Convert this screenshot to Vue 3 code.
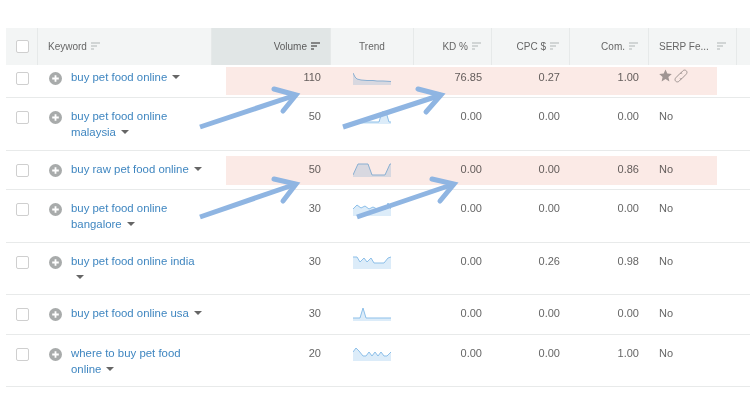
<script setup>
const headers = [
  { label: "Keyword", cls: "left" },
  { label: "Volume", cls: "right active" },
  { label: "Trend", cls: "center", noSort: true },
  { label: "KD %", cls: "right" },
  { label: "CPC $", cls: "right" },
  { label: "Com.", cls: "right" },
  { label: "SERP Fe...", cls: "serp" },
];

// trend points are x,y in a 38x14 box, line only; the fill is closed along the bottom
const rows = [
  { kw: "buy pet food online", vol: 110, kd: "76.85", cpc: "0.27", com: "1.00", serp: null,
    trend: "0,2 2,6 4,8 8,9 14,9.5 20,9.5 24,10 30,10 38,10.5" },
  { kw: "buy pet food online malaysia", vol: 50, kd: "0.00", cpc: "0.00", com: "0.00", serp: "No",
    trend: "0,12 26,12 29,2 33,2 36,12 38,12" },
  { kw: "buy raw pet food online", vol: 50, kd: "0.00", cpc: "0.00", com: "0.86", serp: "No",
    trend: "0,12 5,1 15,1 19,12 32,12 37,1 38,1" },
  { kw: "buy pet food online bangalore", vol: 30, kd: "0.00", cpc: "0.00", com: "0.00", serp: "No",
    trend: "0,7 4,3 8,6 12,4 16,7 20,5 24,7 28,6 33,7 35,1 38,7" },
  { kw: "buy pet food online india", vol: 30, kd: "0.00", cpc: "0.26", com: "0.98", serp: "No",
    trend: "0,2 4,2 7,7 11,3 14,7 18,3 21,8 31,8 35,3 38,2" },
  { kw: "buy pet food online usa", vol: 30, kd: "0.00", cpc: "0.00", com: "0.00", serp: "No",
    trend: "0,11 7,11 10,1 13,11 38,11" },
  { kw: "where to buy pet food online", vol: 20, kd: "0.00", cpc: "0.00", com: "1.00", serp: "No",
    trend: "0,5 3,1 6,4 10,9 13,9 16,5 19,9 22,5 25,9 28,5 31,9 34,9 38,5" },
];

const arrows = [
  { shaft: "M200 127L296 95", head: "M274 89L296 95L283 111" },
  { shaft: "M343 127L441 95", head: "M418 89L441 95L426 112" },
  { shaft: "M200 217L296 184", head: "M274 179L296 184L283 201" },
  { shaft: "M357 217L454 184", head: "M432 179L454 184L440 201" },
];

const areaOf = (pts) => `M0,14 L${pts.split(" ").join(" L")} L38,14 Z`;
</script>

<template>
  <div class="page">
    <div class="table">
      <div class="head">
        <div class="cell check-cell"><span class="checkbox"></span></div>
        <div v-for="h in headers" :key="h.label" class="cell" :class="h.cls">
          <span>{{ h.label }}</span>
          <svg v-if="!h.noSort" class="sort" width="9" height="8" viewBox="0 0 9 8">
            <path d="M0 1H9M0 4H6M0 7H3" fill="none" stroke-width="1.4" />
          </svg>
        </div>
        <div class="cell"></div>
      </div>

      <div v-for="r in rows" :key="r.kw" class="row">
        <div class="check-cell"><span class="checkbox"></span></div>
        <div class="kw">
          <svg class="plus" width="13" height="13" viewBox="0 0 13 13">
            <circle cx="6.5" cy="6.5" r="6.5" fill="#a8abab" />
            <path d="M6.5 3.2V9.8M3.2 6.5H9.8" stroke="#fff" stroke-width="1.8" />
          </svg>
          <div class="kw-text">{{ r.kw }}<span class="caret"></span></div>
        </div>
        <div class="num vol">{{ r.vol }}</div>
        <div class="trend">
          <svg width="38" height="14" viewBox="0 0 38 14">
            <path :d="areaOf(r.trend)" fill="#dcecf9" />
            <polyline :points="r.trend" fill="none" stroke="#8cbfe9" stroke-width="1" />
          </svg>
        </div>
        <div class="num">{{ r.kd }}</div>
        <div class="num">{{ r.cpc }}</div>
        <div class="num">{{ r.com }}</div>
        <div class="serp-cell">
          <template v-if="r.serp">{{ r.serp }}</template>
          <template v-else>
            <svg width="13" height="13" viewBox="0 0 13 13">
              <path d="M6.5 0.5L8.3 4.6L12.8 5L9.4 8L10.4 12.5L6.5 10.1L2.6 12.5L3.6 8L0.2 5L4.7 4.6Z" fill="#a3a3a3" />
            </svg>
            <svg width="14" height="14" viewBox="0 0 14 14">
              <path d="M6 4.8L8.8 1.9C9.9 0.8 11.4 0.9 12.3 1.8C13.2 2.7 13.2 4.2 12.2 5.2L8.2 9.3C7.4 10 6.4 10 5.8 9.4M8 9.2L5.2 12.1C4.1 13.2 2.6 13.1 1.7 12.2C0.8 11.3 0.8 9.8 1.8 8.8L5.8 4.7C6.6 4 7.6 4 8.2 4.6" fill="none" stroke="#a3a3a3" stroke-width="1" />
            </svg>
          </template>
        </div>
      </div>

      <div class="mark mark-one"></div>
      <div class="mark mark-two"></div>
    </div>

    <svg class="arrows" width="750" height="415" viewBox="0 0 750 415">
      <g v-for="a in arrows" :key="a.shaft" fill="none" stroke="#8fb5e2">
        <path :d="a.shaft" stroke-width="5" />
        <path :d="a.head" stroke-width="5" stroke-linecap="round" />
      </g>
    </svg>
  </div>
</template>

<style>
html,
body {
  background: #fff;
}
</style>

<style scoped>
.page {
  position: relative;
  width: 750px;
  height: 415px;
  overflow: hidden;
  padding: 28px 0 0 6px;
  box-sizing: border-box;
  font-family: "Liberation Sans", Arial, sans-serif;
  font-size: 11px;
  color: #666;
}

.table {
  position: relative;
  width: 744px;
}

.head,
.row {
  display: grid;
  grid-template-columns: 32px 174px 119px 83px 78px 78px 79px 88px 13px;
}

.head {
  height: 36.5px;
  background: #f3f5f5;
  font-size: 10px;
}

.cell {
  display: flex;
  align-items: center;
  gap: 4px;
  padding: 0 10px;
  box-sizing: border-box;
  border-right: 1px solid #e6e9e9;
  white-space: nowrap;
}

.cell:last-child {
  border-right: 0;
}

.left {
  justify-content: flex-start;
}

.right {
  justify-content: flex-end;
}

.center {
  justify-content: center;
}

.serp {
  justify-content: space-between;
}

.active {
  background: #e1e6e6;
  color: #5c5c5c;
}

.sort {
  stroke: #c6caca;
  flex: none;
}

.active .sort {
  stroke: #666;
}

.check-cell {
  display: flex;
  align-items: flex-start;
  padding: 0 0 0 10px;
  box-sizing: border-box;
}

.head .check-cell {
  align-items: center;
  border-right: 1px solid #e6e9e9;
}

.checkbox {
  display: block;
  width: 13px;
  height: 13px;
  box-sizing: border-box;
  border: 1px solid #cfcfcf;
  border-radius: 2px;
  background: #fff;
}

/* single-line rows sit at the min-height, wrapped keywords push past it */
.row {
  box-sizing: border-box;
  min-height: 39.33px;
  padding: 10px 0 9.67px;
  border-bottom: 1px solid #e8eaea;
  line-height: 16px;
}

.row .checkbox {
  margin-top: 3px;
}

.row:nth-child(2) {
  min-height: 33.5px;
  padding-top: 4px;
}

.kw {
  display: flex;
  align-items: flex-start;
  gap: 9px;
  padding: 0 7px 0 11px;
}

.plus {
  flex: none;
  margin-top: 3px;
}

.kw-text {
  font-size: 11.4px;
  color: #3f86c0;
}

.caret {
  display: inline-block;
  width: 0;
  height: 0;
  margin-left: 5px;
  vertical-align: 2px;
  border-left: 4px solid transparent;
  border-right: 4px solid transparent;
  border-top: 4px solid #666;
}

.num {
  padding-right: 10px;
  text-align: right;
}

.trend {
  padding: 2px 0 0 22px;
  height: 14px;
}

.trend svg {
  display: block;
}

.serp-cell {
  display: flex;
  align-items: flex-start;
  gap: 2px;
  padding-left: 10px;
}

.mark {
  position: absolute;
  left: 220px;
  width: 491px;
  background: #fbeae6;
  mix-blend-mode: multiply;
}

.mark-one {
  top: 39px;
  height: 28px;
}

.mark-two {
  top: 128px;
  height: 29px;
}

.arrows {
  position: absolute;
  top: 0;
  left: 0;
}
</style>
